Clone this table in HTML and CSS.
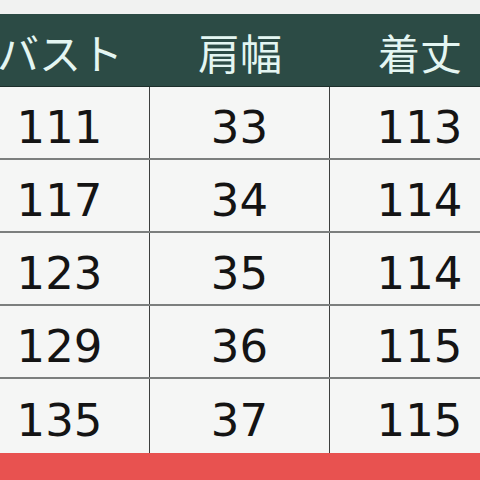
FILE: index.html
```html
<!DOCTYPE html>
<html lang="ja">
<head>
<meta charset="utf-8">
<link rel="stylesheet" href="styles.css">
</head>
<body>
<div class="page">
  <div class="sheet">
    <div class="head">
      <div class="hcell">バスト</div>
      <div class="hcell">肩幅</div>
      <div class="hcell">着丈</div>
    </div>
    <div class="row"><div class="cell">111</div><div class="cell">33</div><div class="cell">113</div></div>
    <div class="row"><div class="cell">117</div><div class="cell">34</div><div class="cell">114</div></div>
    <div class="row"><div class="cell">123</div><div class="cell">35</div><div class="cell">114</div></div>
    <div class="row"><div class="cell">129</div><div class="cell">36</div><div class="cell">115</div></div>
    <div class="row last"><div class="cell">135</div><div class="cell">37</div><div class="cell">115</div></div>
  </div>
  <div class="footer"></div>
</div>
</body>
</html>
```
FILE: styles.css
```css
html, body {
  margin: 0;
  padding: 0;
  background: #f1f2f1;
  overflow: hidden;
}
.page {
  width: 480px;
  height: 480px;
  overflow: hidden;
  display: flex;
  flex-direction: column;
  padding-top: 14px;
  box-sizing: border-box;
}
.sheet {
  width: 540px;
  margin-left: -30px;
  display: flex;
  flex-direction: column;
}
.head {
  display: grid;
  grid-template-columns: 180px 180px 180px;
  height: 72px;
  background: #2c4b45;
  border-bottom: 1px solid #1d2f2b;
}
.hcell {
  display: flex;
  align-items: center;
  justify-content: center;
  color: #e4f6f2;
  font-family: "Noto Sans CJK JP", "Noto Sans", sans-serif;
  font-size: 42px;
  padding-top: 2px;
}
.row {
  display: grid;
  grid-template-columns: 180px 180px 180px;
  height: 71px;
  border-bottom: 2px solid #7c7f7e;
  background: #f5f6f5;
}
.row.last {
  border-bottom: none;
  height: 74px;
}
.cell {
  display: flex;
  align-items: center;
  justify-content: center;
  font-family: "DejaVu Sans", sans-serif;
  font-size: 45px;
  color: #141414;
  border-right: 1.5px solid #3d3f3e;
  padding-top: 9px;
  box-sizing: border-box;
}
.footer {
  flex: 1;
  background: #e85250;
}
```
